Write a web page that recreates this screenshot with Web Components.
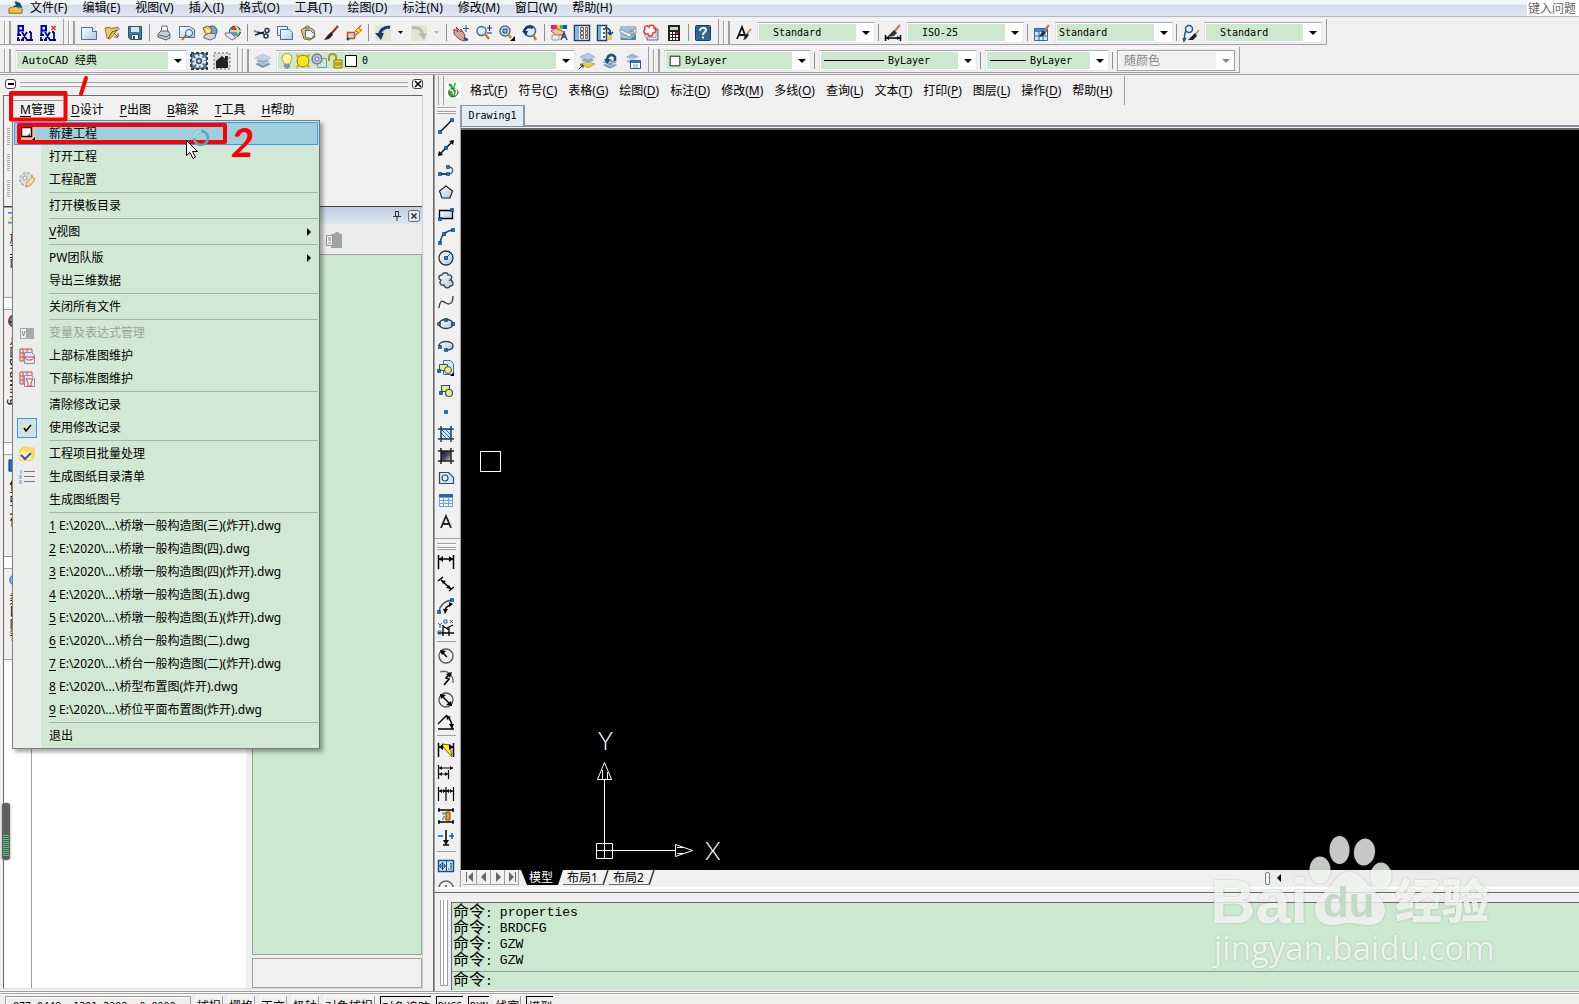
<!DOCTYPE html>
<html lang="zh-CN">
<head>
<meta charset="utf-8">
<title>AutoCAD 经典</title>
<style>
html,body{margin:0;height:100%}
body{overflow:hidden;background:#f0f0f0;color:#000;font:12px/16px "Noto Sans","Noto Sans CJK SC",sans-serif;
--face:#f0f0f0;--line:#a0a0a0;--dark:#696969;--green:#cce8cf;
--mono:"DejaVu Sans Mono","Noto Sans CJK SC",monospace}
</style>
</head>
<body>
<cad-app></cad-app>
<script>
const ICONS = {
app:'<path d="M1 13V8l6-3 8 3v5z" fill="#f4c430" stroke="#8a6a10"/><path d="M6 7l2-7 5 2 3 7z" fill="#13496b"/><path d="M7 7l9 1M6 0l-3 6 5-2z" stroke="#cfe6f5" fill="#fff"/>',
pxi:'<path d="M1.500 10V1H6v4.500H2" stroke="#00b" stroke-width="2" fill="none"/><path d="M0 10h4M5 7l5 8M10 7l-5 8M4 15h3M9 15h3M14 7v8M12 7h2M12 15h4M1 12v3h2" stroke="#009" stroke-width="1.800" fill="none"/>',
pxx:'<path d="M1.500 10V1H6v4.500H2" stroke="#00b" stroke-width="2" fill="none"/><path d="M0 10h4M5 7l5 8M10 7l-5 8M4 15h3M9 15h3M14 7v8M12 7h2M12 15h4M1 12v3h2" stroke="#009" stroke-width="1.800" fill="none"/><path d="M11.500 1l4 4M15.500 1l-4 4" stroke="#e22" stroke-width="1.500"/>',
new:'<path d="M.5 2.500h11l4 4v8H.5z" fill="url(#pg)" stroke="#4e7190"/><path d="M11.500 2.500v4h4" fill="#fff" stroke="#4e7190"/>',
open:'<path d="M1 3l5-1 1 2 7-2-2 5-6 7-3-1z" fill="#e8c96a" stroke="#a07a20"/><path d="M4 14l4-7 6-2M10 8l4 4M14 8v4h-4" stroke="#6b5320" fill="none"/><path d="M8 3h7v2" stroke="#888" fill="#ddd"/>',
save:'<path d="M1.500 1.500h13v13h-11l-2-2z" fill="#3f78b3" stroke="#2b5078"/><path d="M4 2h8v5H4z" fill="#d8e6f2"/><path d="M4.500 9.500h7v5h-7z" fill="#fff" stroke="#2b5078"/><path d="M6 11h2v3H6z" fill="#2b5078"/>',
print:'<path d="M5 7l1-6h5l1 6z" fill="#fff" stroke="#667"/><path d="M2 9l3-3h7l2 3v4l-4 2-8-3z" fill="#c9cdd8" stroke="#566"/><path d="M3 10l8 2 3-3" stroke="#566" fill="none"/>',
preview:'<path d="M.5 1.500h10l5 3v8H.5z" fill="url(#pg)" stroke="#4e7190"/><circle cx="10" cy="8" r="3.500" fill="#dff0fa" stroke="#357"/><path d="M7 10l-4 5" stroke="#a63" stroke-width="2"/>',
publish:'<circle cx="10" cy="6" r="5" fill="#6aa9d8" stroke="#357"/><path d="M1 3l5-2 4 3-1 5-5 1z" fill="#f2c838" stroke="#8a6410"/><path d="M2 11l5-3 7 1-1 4-5 2-6-2z" fill="#d5d8e0" stroke="#667"/><path d="M4 4l3 3" stroke="#fff" stroke-width="2"/>',
web:'<circle cx="10" cy="6.500" r="5.500" fill="#4aa3d8" stroke="#246"/><path d="M10 1c4 1 4 9 0 11M5 6h11" stroke="#ffe27a" fill="none" stroke-width="1.500"/><path d="M7 2h4v3H7z" fill="#d9432f"/><path d="M0 8h6l5 5-4 2-6-4z" fill="#e4e4e8" stroke="#777"/><path d="M11 9l3 2" stroke="#3a3" stroke-width="2"/>',
cut:'<path d="M0 6l10 3M1 10l9-3" stroke="#223" stroke-width="1.500"/><path d="M0 6l4 1" stroke="#9ab" /><circle cx="13" cy="5.500" r="2" fill="none" stroke="#235" stroke-width="1.500"/><circle cx="12" cy="11" r="2" fill="none" stroke="#235" stroke-width="1.500"/>',
copy:'<path d="M.5 1.500h10v9H.5z" fill="#e8f2fa" stroke="#3f6f9a"/><path d="M3.500 4.500h9l3 3v7h-12z" fill="url(#pg)" stroke="#3f6f9a"/>',
paste:'<path d="M1 5l6-4 7 4 1 7-5 3-6-1z" fill="#d9c07a" stroke="#8a6a20"/><path d="M6 1h3v3H5z" fill="#aaa" stroke="#666" stroke-width=".5"/><path d="M5.500 5.500h5l4 4-3 4-6-1z" fill="#eef5fb" stroke="#46708f"/>',
brush:'<path d="M15 1L8 9" stroke="#8a3b1c" stroke-width="2"/><path d="M8 7l2 3-4 4-5 1 4-5z" fill="#222"/>',
match:'<path d="M15 0L9 6l3 1-3 4 7-6-3-1z" fill="#fd3" stroke="#c60"/><path d="M1.500 7.500h7v6h-7z" fill="#bcd9f2" stroke="#d54c10" stroke-width="1.500"/><circle cx="2" cy="14" r="1.500" fill="#157"/>',
undo:'<path d="M0 0h16v16H0z" fill="#e4e3d6"/><path d="M4 11C5 5 9 2 15 2" stroke="#1d3a66" stroke-width="3" fill="none"/><path d="M0 8h9l-3 7z" fill="#1d3a66"/>',
redo:'<path d="M0 0h16v16H0z" fill="#e4e3d6"/><path d="M1 3c6-1 10 1 11 7" stroke="#bcbcb4" stroke-width="3" fill="none"/><path d="M7 8h9l-3 7z" fill="#bcbcb4"/>',
pan:'<path d="M1 4l4 3-2-5 5 5 0-3 4 6-1 4 3 1-3 1-5-2-5-5z" fill="#dba394" stroke="#7c4a40"/><path d="M13 0v7M10 3.500h6" stroke="#258"/><path d="M11 13l4 2" stroke="#258" stroke-width="2"/>',
zoom:'<circle cx="5.500" cy="6" r="4.500" fill="#dcecf7" stroke="#567" stroke-width="1.500"/><path d="M9 9l4 5" stroke="#b9853c" stroke-width="2.500"/><path d="M11 3h5M13.500 0v6M11 8h5" stroke="#135"/>',
zoomw:'<circle cx="6" cy="6" r="5" fill="#dcecf7" stroke="#567" stroke-width="1.500"/><path d="M4 4h4v4H4z" fill="#8fb6d8" stroke="#247"/><path d="M9 9l3 4" stroke="#b9853c" stroke-width="2.500"/><path d="M16 11v5h-5z"/>',
zoomp:'<circle cx="8" cy="6" r="5.500" fill="#dcecf7" stroke="#567" stroke-width="1.500"/><path d="M11 10l3 5" stroke="#b9853c" stroke-width="2.500"/><path d="M2 7c1-5 5-6 9-4" stroke="#1d3a66" stroke-width="2.500" fill="none"/><path d="M0 6h6l-2 5z" fill="#1d3a66"/>',
props:'<path d="M0 0h3v4H0z" fill="#e0e"/><path d="M3 0h3v4H3z" fill="#e33"/><path d="M6 0h3v4H6z" fill="#fd0"/><path d="M9 0h3v4H9z" fill="#3c3"/><path d="M12 0h4v4h-4z" fill="#24e"/><path d="M0 6l5-3 6 3 3 1-3 3-6 0z" fill="#f0c0a0" stroke="#955"/><path d="M1 10h7v5H1z" fill="#eee" stroke="#999"/><path d="M10 15l3-7 3 7M11 12h4" stroke="#346" stroke-width="1.500" fill="none"/>',
dc:'<path d="M.5.5h15v15H.5z" fill="#fff" stroke="#1d3f66" stroke-width="1.500"/><path d="M1 1h4v14H1z" fill="#8fb3d6"/><path d="M6.500 2.500h3v3h-3zM11.500 2.500h2v3h-2zM6.500 6.500h3v3h-3zM11.500 6.500h2v3h-2zM6.500 10.500h3v3h-3zM11.500 10.500h2v3h-2z" fill="#ddd" stroke="#444" stroke-width=".8"/>',
tp:'<path d="M.5.5h9v15h-9z" fill="#fff" stroke="#1d3f66" stroke-width="1.500"/><path d="M1 1h3v14H1z" fill="#7ea8d0"/><path d="M6 3h2v2H6zM6 7h2v2H6zM6 11h2v2H6z" fill="#555"/><path d="M8 3c5 0 6 3 5 7M13 10l-2-3M13 10l3-3" stroke="#1d3f66" stroke-width="1.500" fill="none"/><path d="M11 11h4v4h-4z" fill="#ec4"/>',
sheet:'<path d="M0 1h16v14H0z" fill="#a3c1d4"/><path d="M0 4l8 4 8-5v5l-7 4-9-5z" fill="#eef2ee" stroke="#8a9a9a"/><path d="M1 13l9 1 6-5v6H1z" fill="#4f86ad"/><circle cx="12" cy="7.500" r="2" fill="#c8ccc8" stroke="#777"/>',
mark:'<path d="M4 4h11v11H4z" fill="#dde" stroke="#668"/><path d="M2 2h11v10H2z" fill="#fff" stroke="#99a"/><path d="M2 4c-2-3 3-4 4-2 1-3 6-2 5 1 3 1 2 5-1 5 0 4-5 4-5 1-4 1-5-3-3-5z" fill="#fff" stroke="#e33" stroke-width="1.500"/>',
calc:'<path d="M2 0h12v16H2z" fill="#222"/><path d="M4 2h8v3H4z" fill="#bfe0c0"/><path d="M4 7h2v2H4zM7 7h2v2H7zM4 10h2v2H4zM7 10h2v2H7zM4 13h2v2H4zM7 13h2v2H7zM10 10h2v2h-2zM10 13h2v2h-2z" fill="#fff"/><path d="M10 7h2v2h-2z" fill="#e22"/>',
help:'<rect x=".5" y=".5" width="15" height="15" rx="1" fill="#2b6699" stroke="#173d63"/><path d="M5 6c0-4 6-4 6-1 0 2-3 2-3 5M8 11.500v2" stroke="#fff" stroke-width="2" fill="none"/>',
tstyle:'<path d="M1 14L6 2l4 11M3 10h6" stroke="#111" stroke-width="1.800" fill="none"/><path d="M15 4l-4 5" stroke="#c85" stroke-width="2"/><path d="M11 8l2 2-3 4-3 1z" fill="#222"/>',
dstyle:'<path d="M.5 10v6M15.500 10v6M1 13h14" stroke="#000" stroke-width="1.500"/><path d="M4 11l-3 2 3 2M12 11l3 2-3 2"/><path d="M15 0L9 7" stroke="#c75" stroke-width="2"/><path d="M9 5l3 3-3 3-7 1z" fill="#333"/>',
tbstyle:'<path d="M.5 3.500h13v12H.5z" fill="#d6e6f8" stroke="#3466a8"/><path d="M1 4h12v3H1z" fill="#4a7fc4"/><path d="M1 11h12M5 7v8M9 7v8" stroke="#3466a8"/><path d="M15 0L9 7" stroke="#c75" stroke-width="2"/><path d="M9 5l3 3-3 3-4 1z" fill="#333"/>',
ml:'<circle cx="6" cy="4" r="3.500" fill="#e6f2fa" stroke="#1c5c94" stroke-width="1.500"/><path d="M3 6C1 9 2 11 1 15M0 13l1 3 2-3" stroke="#1c5c94" stroke-width="1.500" fill="none"/><path d="M16 5l-4 5" stroke="#c96" stroke-width="2"/><path d="M12 8l2 3-4 4-5 0z" fill="#222"/>',
gear:'<path d="M0 0h16v16H0z" fill="#55758d"/><path d="M0 0h16v16H0z" fill="none" stroke="#26455f" stroke-width="2" stroke-dasharray="3 2"/><circle cx="8" cy="8" r="5.500" fill="none" stroke="#e8eef2" stroke-width="3" stroke-dasharray="2.500 1.820"/><circle cx="8" cy="8" r="4" fill="#3d5a72" stroke="#e8eef2" stroke-width="1.500"/><circle cx="8" cy="8" r="1.500" fill="#cdd"/>',
home:'<path d="M0 0h16v16H0z" fill="#ddd"/><path d="M0 0h16v16H0z" fill="none" stroke="#666" stroke-dasharray="2 2"/><path d="M2 8l6-5 6 5v7H2z" fill="#222"/><path d="M11 3h3v4h-3z" fill="#222"/>',
layers:'<path d="M0 11l8-3 8 3-8 4z" fill="#7c97b0"/><path d="M0 8l8-3 8 3-8 4z" fill="#9fb6ca" stroke="#fff" stroke-width=".5"/><path d="M0 5l8-4 8 4-8 3z" fill="#c6d6e4" stroke="#8aa4bb" stroke-width=".5"/>',
lay1:'<path d="M1 11l8-3 7 3-7 4z" fill="#e8c83c" stroke="#987a10" stroke-width=".5"/><path d="M1 7l8-3 7 3-7 4z" fill="#8faac2" stroke="#fff" stroke-width=".5"/><path d="M1 4l8-4 7 4-7 3z" fill="#b6cadb" stroke="#7c98b0" stroke-width=".5"/><path d="M0 16l4-4M1 12h3v3" stroke="#124" fill="none"/>',
lay2:'<path d="M0 12l8-3 8 3-8 4zM0 9l8-3 8 3-8 4z" fill="#7f9bb6" stroke="#fff" stroke-width=".5"/><path d="M5 8c0-6 5-8 8-4v4" stroke="#264c7a" stroke-width="2.500" fill="none"/><path d="M2 6h7l-4 5z" fill="#264c7a"/>',
lay3:'<path d="M0 8l7-3 8 3-8 4zM0 4l7-4 8 4-8 3z" fill="#9db6cb" stroke="#fff" stroke-width=".5"/><path d="M5.500 7.500h10v8h-10z" fill="#fff" stroke="#1f5a9c"/><path d="M6 7h9v3H6z" fill="#2a6fc0"/><path d="M8 12h5M8 14h5" stroke="#89a"/>',
bulb:'<path d="M3 5c0-6 10-6 10 0 0 3-2 3-2 6H5c0-3-2-3-2-6z" fill="#fff6a8" stroke="#b79b38"/><path d="M5 11h6v3l-2 2H7l-2-2z" fill="#8b93a6"/>',
sun:'<path d="M1 1h3v3H1zM12 1h3v3h-3zM1 12h3v3H1zM12 12h3v3h-3z" fill="#e8b820"/><circle cx="8" cy="8" r="6" fill="#f6e71d" stroke="#8a7a10"/>',
vp:'<circle cx="6" cy="6" r="5" fill="#b8c4d8" stroke="#7183a5" stroke-width="1.500"/><circle cx="6" cy="6" r="2" fill="#dfe6f0" stroke="#7183a5"/><path d="M10.500 5.500h5v9h-9v-4" fill="none" stroke="#8894a8"/>',
lock:'<path d="M2 8V4c0-4 7-4 7 0v3" stroke="#a3a014" stroke-width="2" fill="none"/><path d="M7 7h8v8H7z" fill="#e8d93a" stroke="#807808"/><path d="M8 10h6M8 12h6" stroke="#807808"/>',
sq:'<path d="M2.500 2.500h11v11h-11z" fill="#fff" stroke="#000"/>',
lisp:'<path d="M0 0h16v16H0z" fill="#fff"/><path d="M3 1l4 5M5 1l2 4M10 0L8 6" stroke="#2a2" stroke-width="1.500"/><path d="M3 8c4-4 9-2 10 2-1 5-8 7-10 2z" fill="#4c9e4c" stroke="#175c17"/><path d="M4 8c2-2 4 1 4 4M9 6c3 1 3 4 1 7" stroke="#fff" stroke-width="1.500" fill="none"/>',
line:'<path d="M2 14L14 2" stroke="#000" stroke-width="1.300"/>@2,14@14,2',
xline:'<path d="M1 15L15 1" stroke="#000" stroke-width="1.500"/><path d="M0 16l1-5 4 4zM16 0l-5 1 4 4z"/>@8,8',
pline:'<path d="M2 12h8" stroke="#000" stroke-width="1.500"/><path d="M10 5c6-1 6 7 1 7" stroke="#666" stroke-width="1.500" fill="none"/>@2,12@10,12@10,5',
poly:'<path d="M8 2l6.500 5-2.500 7H4L1.500 7z" fill="url(#pg)" stroke="#222" stroke-width="1.200"/>',
rect:'<path d="M1.500 4.500h13v8h-13z" fill="url(#pg)" stroke="#000" stroke-width="1.300"/>@2,13@14,4',
arc:'<path d="M2 15C3 8 7 3 15 2" stroke="#444" stroke-width="1.500" fill="none"/>@2,15@6,6@15,2',
circ:'<circle cx="8" cy="8" r="7" fill="url(#pg)" stroke="#333" stroke-width="1.300"/><path d="M8 8l5-5" stroke="#07c"/>@8,8',
cloud:'<path d="M3 8c-3-1-3-5 1-5 1-3 6-3 6 0 4-1 5 3 2 5 4 1 4 6 0 6-1 3-6 2-6-1-4 1-5-3-3-5z" fill="url(#pg)" stroke="#444" stroke-width="1.300"/>',
spline:'<path d="M1 14C2 5 5 7 8 9s7 1 7-7" stroke="#444" stroke-width="1.400" fill="none"/>',
ell:'<ellipse cx="8" cy="8" rx="7" ry="4.500" fill="url(#pg)" stroke="#333" stroke-width="1.300"/>@8,4@1,8@15,8',
ella:'<path d="M1 8c0-6 14-6 14 0 0 3-3 4-7 4" fill="url(#pg)" stroke="#444" stroke-width="1.500"/>@8,12@2,9',
insb:'<path d="M5.500.500h7l3 3v11h-10z" fill="#dbe8f4" stroke="#46729a"/><path d="M1.500 4.500h8v6h-8z" fill="#f2e98a" stroke="#2f5573"/><circle cx="10" cy="10" r="3.500" fill="#f2e98a" stroke="#2f5573"/><path d="M16 12v4h-4z"/>@1,11',
mkb:'<path d="M3.500 3.500h8v6h-8z" fill="#f2e98a" stroke="#2f5573" stroke-width="1.200"/><circle cx="11" cy="11" r="3.500" fill="#f2e98a" stroke="#2f5573" stroke-width="1.200"/>@3,11',
pt:'@8,8',
hatch:'<path d="M3 3h10v10H3z" fill="#cfe2f2"/><path d="M3 3l10 10M3 7l6 6M7 3l6 6M3 11l2 2M11 3l2 2" stroke="#37688f"/><path d="M0 3h16M0 13h16M3 0v16M13 0v16" stroke="#1a3e5e" stroke-width="1.500"/>',
grad:'<path d="M3 3h10v10H3z" fill="url(#gd)"/><path d="M0 3h16M0 13h16M3 0v16M13 0v16" stroke="#222" stroke-width="1.500"/>',
region:'<path d="M1.500 2.500h9l5 5v6h-14z" fill="#d9e8f5" stroke="#1d4f78" stroke-width="1.200"/><circle cx="7" cy="8" r="3" fill="#f0f0f0" stroke="#1d4f78" stroke-width="1.200"/>',
table:'<path d="M1 2h14v13H1z" fill="#6f9fdc"/><path d="M1 2h14v3H1z" fill="#2c62b4"/><path d="M2 6h3v2H2zM6 6h4v2H6zM11 6h3v2h-3zM2 9h3v2H2zM6 9h4v2H6zM11 9h3v2h-3zM2 12h3v2H2zM6 12h4v2H6zM11 12h3v2h-3z" fill="#eef5ff"/>',
mtext:'<path d="M3 14L8 2l5 12M5 10h6" stroke="#222" stroke-width="1.800" fill="none"/>',
dlin:'<path d="M.5 1v14M15.500 1v14M1 5h14" stroke="#000" stroke-width="1.500" fill="none"/><path d="M1 5l4-3v6zM15 5l-4-3v6z"/>',
dali:'<path d="M0 5l5-4M11 15l5-4M3 4l10 9" stroke="#000" stroke-width="1.500"/><path d="M3 4l5 1-3 3zM13 13l-5-1 3-3z"/>',
darc:'<path d="M1 14C2 7 6 3 14 2" stroke="#555" stroke-width="1.500" fill="none"/><path d="M7 13c0-3 2-5 6-6" stroke="#000" stroke-width="1.500" fill="none"/><path d="M5 11h5l-3 5zM15 6l-4-2v5z"/>@1,14@14,2',
dord:'<path d="M5 5v11M5 6l6 4M11 8v8M0 13h16M9 8l6-3" stroke="#000" stroke-width="1.300" fill="none"/><path d="M0 3l2 2 2-2M2 5v3M6 0h3v3H6zM12 0l3 3M15 0l-3 3M0 11h3v3H0z" stroke="#26629a" fill="none"/>',
drad:'<circle cx="8" cy="8" r="7" fill="none" stroke="#555" stroke-width="1.300"/><path d="M3 3l6 6" stroke="#000" stroke-width="1.500"/><path d="M2 2l6 1-4 4z"/>',
djog:'<path d="M2 2c8-3 14 4 13 11" stroke="#666" fill="none" stroke-width="1.300"/><path d="M12 3L8 8l3 1-5 6" stroke="#000" fill="none" stroke-width="1.500"/><path d="M14 2L8 4l4 4z"/>',
ddia:'<circle cx="8" cy="8" r="7" fill="none" stroke="#555" stroke-width="1.300"/><path d="M3 3l10 10" stroke="#000" stroke-width="1.500"/><path d="M2 2l6 1-5 4zM14 14l-6-1 5-4z"/>',
dang:'<path d="M0 15h16M0 10l9-9M9 3c4 2 5 6 5 12" stroke="#000" stroke-width="1.400" fill="none"/><path d="M8 1l5 2-4 3zM14 15l-3-5h5z"/>',
qdim:'<path d="M.5 1v14M15.500 1v14M1 5h14" stroke="#000" stroke-width="1.500"/><path d="M4 2l8 1 2 12L6 6z" fill="#fe2" stroke="#660"/><path d="M1 5l4-3v6zM15 5l-4-3v6z"/>',
dbase:'<path d="M.5 1v14M1 4h14M1 10h9M10.500 6v9" stroke="#000" stroke-width="1.200"/><path d="M1 4l3-2v4zM15 4l-3-2v4zM1 10l3-2v4zM10 10L7 8v4z"/>',
dcont:'<path d="M.5 1v14M8 1v14M15.500 1v14M1 5h14" stroke="#000" stroke-width="1.200"/><path d="M1 5l3-2v4zM8 5L5 3v4zM8 5l3-2v4zM15 5l-3-2v4z"/>',
dspace:'<path d="M0 2h16M0 14h16M1 0v4M15 0v4M1 12v4M15 12v4" stroke="#000" stroke-width="1.300"/><path d="M4 5h4M4 11h4M6 5v6" stroke="#06a" stroke-dasharray="2 1"/><path d="M8 4h4v8H8z" fill="#e9a820" stroke="#742"/>',
dbreak:'<path d="M8 0v14M5 15h6" stroke="#000" stroke-width="1.500"/><path d="M5 10h6l-3 5z"/><path d="M0 6h5M11 6h5M14 3v6" stroke="#06a" stroke-width="1.500"/>',
tol:'<path d="M.5 2.500h15v11H.5z" fill="#d6e6f6" stroke="#155088" stroke-width="1.500"/><path d="M8.500 3v10M4.500 4v8M1 8h7" stroke="#155088"/><circle cx="4.500" cy="8" r="2.500" fill="none" stroke="#155088"/><path d="M10 11h1M13 5v7M12 6l1-1" stroke="#036"/>',
cmark:'<circle cx="8" cy="8" r="7" fill="none" stroke="#666" stroke-width="1.500"/><path d="M8 5v6M5 8h6" stroke="#000"/>',
mnew:'<path d="M0 0h16v16H0z" fill="#f3b9b4"/><path d="M2.500 1.500h10v9h-10z" fill="#fff" stroke="#000" stroke-width="1.500"/><path d="M8 10l3-3v3z" fill="#e22"/><path d="M16 11v5h-5z"/>',
mgear:'<circle cx="7.500" cy="7.500" r="6" fill="#dcdcdc" stroke="#b4b4b4" stroke-width="3" stroke-dasharray="2.500 1.500"/><circle cx="7.500" cy="7.500" r="5.500" fill="#dedede"/><circle cx="6" cy="6" r="2" fill="#fff" stroke="#999"/><path d="M7 15l1-5 5-5 3 2-4 6z" fill="#f5dca0" stroke="#c99a4a"/>',
mvar:'<path d="M1 3h14v11H1z" fill="#a8aca8"/><path d="M2 4h5v9H2z" fill="#e9eeea"/><path d="M3 6l1.500 5L6 6" stroke="#888" fill="none"/>',
mup:'<path d="M1 1h12v12H1zM1 5h12M1 9h12M4 1v12M8 1v12" fill="none" stroke="#d04848"/><path d="M5.500 4.500h7l3 3v8h-10z" fill="#e0e4f4" stroke="#8890b8"/><path d="M6 9h9c0 4-9 4-9 0z" fill="#fff" stroke="#d33"/>',
mdown:'<path d="M1 1h12v12H1zM1 5h12M1 9h12M4 1v12M8 1v12" fill="none" stroke="#d04848"/><path d="M5.500 4.500h7l3 3v8h-10z" fill="#e0e4f4" stroke="#8890b8"/><path d="M7 8h7l-2 3v4H9v-4z" fill="#fff" stroke="#d33"/>',
mcheck:'<path d="M5 8l2 3 5-6" fill="none" stroke="#000" stroke-width="1.500"/>',
mbatch:'<path d="M1 4l3-3h4l1 1h6v9l-2 3H1z" fill="#ffe06a" stroke="#f0cc40"/><path d="M1 5h12v9H1z" fill="#fff09a" stroke="#f0d850"/><path d="M2 9l4 4 6-6" stroke="#44d" stroke-width="2" fill="none"/>',
mlist:'<path d="M5 2.500h11M5 7.500h11M5 12.500h11" stroke="#777"/><path d="M2 1v4M0 7h3M0 9h3M0 12h3M0 14h3" stroke="#8bb8dc" stroke-width="1.500"/>',
mclip:'<path d="M5 2h3l2-2h2l2 2h2v14H5z" fill="#a0a4a0"/><path d="M.5 3.500h6v10h-6z" fill="#eee" stroke="#999"/><path d="M2 6h3M2 8h3M2 11h3" stroke="#888"/>',
tab1:'<path d="M0 1h16M0 12h12" stroke="#58c" stroke-width="2"/><path d="M1 7l5-3v6z" fill="#f7c530"/>',
tab2:'<circle cx="8" cy="8" r="7" fill="#3a7" stroke="#a33" stroke-width="2"/><path d="M1 9h14" stroke="#23a" stroke-width="2"/>',
tab3:'<path d="M1 1h13v13H1z" fill="#36a" stroke="#147"/>',
tab4:'<circle cx="8" cy="8" r="6" fill="#7ab8f0" stroke="#36a"/>'
};
const svg = (n, w = 16) => {
  const body = ICONS[n].replace(/@(\d+),(\d+)/g, (m, x, y) => `<path d="M${x - 1.5} ${y - 1.5}h3v3h-3z" fill="#0a7bd0" stroke="#035" stroke-width=".6"/>`);
  const defs = (body.includes('url(#pg)') ? '<linearGradient id="pg" x2="1" y2="1"><stop stop-color="#fff"/><stop offset="1" stop-color="#a9c9e2"/></linearGradient>' : '') +
    (body.includes('url(#gd)') ? '<linearGradient id="gd" x2="1" y2="1"><stop stop-color="#112"/><stop offset=".5" stop-color="#446"/><stop offset="1" stop-color="#dd5"/></linearGradient>' : '');
  return `<svg viewBox="0 0 16 16" width="${w}" height="${w}" aria-hidden="true">${defs ? `<defs>${defs}</defs>` : ''}${body}</svg>`;
};
const BASE = `<style>*{box-sizing:border-box}svg{display:block;flex:none;overflow:visible}
button{font:inherit;color:inherit;background:none;border:0;padding:0;margin:0;white-space:nowrap}u{text-underline-offset:2px}</style>`;
const define = (name, render) => customElements.define(name, class extends HTMLElement {
  connectedCallback() {
    if (this.shadowRoot) return;
    this.attachShadow({mode: 'open'}).innerHTML = BASE + render(this);
  }
});

define('cad-icon', el => `<style>:host{display:block;flex:none}</style>${svg(el.getAttribute('name'), el.getAttribute('size') || 16)}`);

define('cad-button', el => `<style>:host{display:block;flex:none}button{display:flex;align-items:center;height:22px;width:23px;padding:0 3px 0 4px}
:host([strip]) button{width:23px;padding:0 4px 0 3px}</style><button aria-label="${el.getAttribute('name')}">${svg(el.getAttribute('name'))}</button>`);

define('cad-arrow', () => `<style>:host{display:flex;flex:none;width:13px;justify-content:center}button{display:flex}</style>
<button aria-label="more"><svg width="5" height="3"><path d="M0 0h5L2.500 3z" fill="currentColor"/></svg></button>`);

define('cad-sep', () => `<style>:host{display:flex;flex:none;width:6px;justify-content:center;align-self:stretch;padding:3px 0}
i{width:1px;background:#909090}</style><i></i>`);

define('cad-toolbar', () => `<style>:host{display:flex;flex:none;align-items:center;margin-bottom:2px;padding:2px 4px 0;border:solid var(--line);border-width:0 1px 1px 0;box-shadow:inset 0 1px #fafafa}
i{align-self:stretch;width:7px;margin-right:2px;border:solid var(--line);border-width:0 1px;background:linear-gradient(90deg,#fff 1px,var(--face) 1px 4px,var(--line) 4px 5px,#fff 5px)}</style><i></i><slot></slot>`);

define('cad-combo', el => `<style>:host{display:flex;flex:none;height:21px;margin:0 0 0 2px;border:1px solid #abadb3;border-color:#abadb3 #e3e9ef #e3e9ef #e2e3ea;background:#fff;padding:1px;align-items:stretch}
div{flex:1;min-width:0;display:flex;align-items:center;background:var(--green)}
:host([off]) div{background:var(--face)}
:host([off]){border-color:var(--line);color:#888}
select{appearance:none;flex:1;min-width:0;align-self:stretch;background:none;border:0;border-radius:0;padding:0;color:inherit;opacity:1;font:10px/16px var(--mono)}
:host([big]) select{font-size:11px}:host([off]) select{font-size:12px}
b{width:17px;display:flex;align-items:center;justify-content:flex-end;padding-right:3px}</style>
<div><slot></slot><select aria-label="${el.getAttribute('label')}" style="padding-left:${el.getAttribute('indent') || 4}px"${el.hasAttribute('off') ? ' disabled' : ''}><option>${el.getAttribute('value')}</option></select></div>
<b><svg width="8" height="4"><path d="M0 0h8L4 4z" fill="currentColor"/></svg></b>`);

define('cad-menubar', () => {
  const items = ['文件(F)','编辑(E)','视图(V)','插入(I)','格式(O)','工具(T)','绘图(D)','标注(N)','修改(M)','窗口(W)','帮助(H)'];
  return `<style>:host{display:flex;flex:none;height:17px;border-bottom:1px solid #b0b8cc;background:linear-gradient(#f2f5fa 0 4px,#d5dcee 5px,#e0e5f3);padding-left:8px;align-items:center}
nav{display:flex;gap:15px;margin-left:7px;flex:1}
input{width:52px;height:16px;border:0;padding:0 1px;font:12px/16px "Noto Sans CJK SC",sans-serif;background:#fff}input::placeholder{color:#666}</style>
${svg('app', 15)}<nav>${items.map(t => `<button>${t}</button>`).join('')}</nav><input aria-label="键入问题" placeholder="键入问题">`;
});

const btns = s => s.split(' ').map(n => n === '|' ? '<cad-sep></cad-sep>' : n === 'v' ? '<cad-arrow></cad-arrow>' : n === 'V' ? '<cad-arrow class="dim"></cad-arrow>' : `<cad-button name="${n}"></cad-button>`).join('');
const combo = (w, label, value, indent, inner = '', extra = '') => `<cad-combo style="width:${w}px" label="${label}" value="${value}" indent="${indent}" ${extra}>${inner}</cad-combo>`;

define('cad-toolbars', () => `<style>:host{display:block;flex:none;padding-top:2px;border-bottom:1px solid var(--line)}
.row{display:flex;height:28px}.row+.row{height:27px}.row+.row cad-toolbar{margin-bottom:1px}.dim{color:#bbb}
.in{margin-left:2px}.rule{height:1px;background:#000;margin-left:3px}.set{display:flex;padding-left:1px}</style>
<div class="row"><cad-toolbar>${btns('pxi pxx')}</cad-toolbar>
<cad-toolbar>${btns('new open save | print preview publish web | cut copy paste brush match | undo v redo V | pan zoom zoomw zoomp | props dc tp sheet mark calc | help')}</cad-toolbar>
<cad-toolbar>${btns('tstyle')}${combo(118,'文字样式','Standard',14)}${btns('| dstyle')}${combo(118,'标注样式','ISO-25',14)}${btns('| tbstyle')}${combo(118,'表格样式','Standard',2)}${btns('| ml')}${combo(118,'引线样式','Standard',14)}</cad-toolbar></div>
<div class="row"><cad-toolbar>${combo(172,'工作空间','AutoCAD 经典',5,'','big')}${btns('gear home')}</cad-toolbar>
<cad-toolbar>${btns('layers')}${combo(299,'图层','0',3,`<span class="set">${['bulb','sun','vp','lock','sq'].map(n => `<cad-icon name="${n}"></cad-icon>`).join('')}</span>`)}${btns('lay1 lay2 lay3')}</cad-toolbar>
<cad-toolbar>${combo(147,'颜色','ByLayer',3,'<cad-icon class="in" name="sq" size="14"></cad-icon>')}<cad-sep></cad-sep>${combo(158,'线型','ByLayer',4,'<span class="rule" style="width:60px"></span>')}<cad-sep></cad-sep>${combo(124,'线宽','ByLayer',4,'<span class="rule" style="width:36px"></span>')}<cad-sep></cad-sep>${combo(118,'打印样式','随颜色',5,'','off')}</cad-toolbar></div>`);

define('drop-menu', () => {
  const rows = [['新建工程','mnew','hot'],['打开工程'],['工程配置','mgear'],0,['打开模板目录'],0,['<u>V</u>视图','','sub'],0,['PW团队版','','sub'],['导出三维数据'],0,['关闭所有文件'],0,['变量及表达式管理','mvar','off'],['上部标准图维护','mup'],['下部标准图维护','mdown'],0,['清除修改记录'],['使用修改记录','mcheck','on'],0,['工程项目批量处理','mbatch'],['生成图纸目录清单','mlist'],['生成图纸图号'],0,
  ...['桥墩一般构造图(三)(炸开)','桥墩一般构造图(四)','桥墩一般构造图(四)(炸开)','桥墩一般构造图(五)','桥墩一般构造图(五)(炸开)','桥台一般构造图(二)','桥台一般构造图(二)(炸开)','桥型布置图(炸开)','桥位平面布置图(炸开)'].map((t, i) => [`<u>${i + 1}</u> E:\\2020\\...\\${t}.dwg`]),0,['退出']];
  return `<style>:host{display:block;width:308px;border:1px solid #808080;border-right-color:#707070;padding:1px;background:linear-gradient(90deg,#e9eeea 28px,#d1e8d4 28px);box-shadow:3px 3px 4px rgba(0,0,0,.35)}
button{display:flex;align-items:center;width:100%;height:23px;text-align:left}
.i{width:35px;display:flex;padding-left:5px;flex:none}.t{flex:1}
hr{height:1px;border:0;margin:1px 0 1px 35px;background:#a8b4aa}
.hot{background:#9fcfdf;box-shadow:inset 0 0 0 1px #3399ff}.off{color:#98a69a}
.on .i{padding:0}.on .b{margin-left:3px;padding:1px;border:1px solid #3399ff;background:#cfe3e0}
.sub:after{content:"";border:4px solid transparent;border-left-color:#000;border-right:0;margin-right:7px}</style>
${rows.map(r => r ? `<button class="${r[2] || ''}"${r[2] === 'off' ? ' disabled' : ''}><span class="i"><span class="b">${r[1] ? svg(r[1]) : ''}</span></span><span class="t">${r[0]}</span></button>` : '<hr>').join('')}`;
});

define('side-tab', el => `<style>:host{display:block;height:${el.getAttribute('h')}px;background:var(--face);border-bottom:1px solid var(--line);border-top:1px solid var(--line);margin-bottom:11px;padding:4px 0 0 4px;overflow:hidden;flex:none}
button{display:flex;flex-direction:column;gap:6px;align-items:flex-start}span{writing-mode:vertical-lr;font-size:12px;line-height:12px}</style>
<button>${svg(el.getAttribute('icon'), 14)}<span><slot></slot></span></button>`);

define('side-dock', () => `<style>:host{display:flex;flex-direction:column;width:435px;flex:none;position:relative;border-right:1px solid var(--line);box-shadow:inset -1px 0 var(--dark);padding:0 11px 2px 3px}
header{display:flex;align-items:center;gap:2px;height:18px;margin-bottom:2px;padding-left:2px}
header i{flex:1;height:5px;margin:0 2px;border:solid var(--line);border-width:1px 0;background:#fff;background-clip:content-box;padding-top:2px}
header button{width:11px;height:10px;border:1px solid #444;border-radius:3px;display:flex;align-items:center;justify-content:center;background:#fff}
.box{flex:1;display:flex;flex-direction:column;border:1px solid var(--dark);border-right-color:#d0d0d0;border-bottom-color:#ddd;min-height:0}
nav{display:flex;height:27px;padding-left:8px;flex:none;align-items:center}
nav button{padding:0 8px;height:20px}nav .open{border-top:1px solid #999;border-left:1px solid #ccc;padding-left:7px}
.tools{height:83px;flex:none;display:flex;flex-direction:column;gap:9px;padding:5px 3px}
.tools i{width:3px;height:17px;background:repeating-linear-gradient(#aaa 0 1px,transparent 1px 2px)}
.main{flex:1;display:flex;min-height:0;border-top:1px solid #444}
.tabs{width:28px;border-right:1px solid var(--line);background:#fff;display:flex;flex-direction:column}
.tree{flex:1;background:#fff}
.list{width:170px;margin-left:6px;display:flex;flex-direction:column}
.title{height:17px;display:flex;align-items:center;justify-content:flex-end;gap:7px;padding-right:2px;background:linear-gradient(#bfcfe2,#dbe5f1);flex:none}
.title button{display:flex}
.bar{height:30px;padding:8px 0 0 74px;background:#ecedec;flex:none}
.green{flex:1;background:var(--green);border:1px solid var(--line)}
.foot{height:30px;border:1px solid var(--line);margin-top:3px;flex:none}
drop-menu{position:absolute;left:12px;top:45px}
.handle{position:absolute;left:2px;top:728px;width:8px;height:57px;border-radius:3px;background:#606060;box-shadow:0 0 3px #999;padding:32px 1px 2px}
.handle i{display:block;height:22px;background:repeating-linear-gradient(#4ecb7d 0 1px,#555 1px 2px)}</style>
<header><button aria-label="收起"><svg width="6" height="2"><path d="M0 0h6v2H0z"/></svg></button><i></i><button aria-label="关闭"><svg width="6" height="6"><path d="M0 0l6 6M6 0L0 6" stroke="#000" stroke-width="1.500"/></svg></button></header>
<div class="box"><nav><button class="open"><u>M</u>管理</button><button><u>D</u>设计</button><button><u>P</u>出图</button><button><u>B</u>箱梁</button><button><u>T</u>工具</button><button><u>H</u>帮助</button></nav>
<div class="tools"><i></i><i></i><i></i></div>
<div class="main"><div class="tabs"><side-tab h="91" icon="tab1">施工面</side-tab><side-tab h="134" icon="tab2">总图Drawing</side-tab><side-tab h="103" icon="tab3">修改文件</side-tab><side-tab h="92" icon="tab4">梁口向钢</side-tab></div><div class="tree"></div>
<div class="list"><div class="title"><button aria-label="固定"><svg width="8" height="10"><path d="M2.500 0v5M5.500 0v5M2 .5h4M0 5.500h8M4 6v4" stroke="#333" fill="none"/></svg></button><button aria-label="关闭"><svg width="12" height="12"><rect x=".5" y=".5" width="11" height="11" rx="2" fill="#dfe7f1" stroke="#667"/><path d="M3.500 3.500l5 5M8.500 3.500l-5 5" stroke="#333" stroke-width="1.500"/></svg></button></div>
<div class="bar">${svg('mclip')}</div><div class="green"></div><div class="foot"></div></div></div></div>
<div class="handle"><i></i></div><drop-menu></drop-menu>`);

define('lisp-bar', () => {
  const items = ['格式(F)','符号(C)','表格(G)','绘图(D)','标注(D)','修改(M)','多线(O)','查询(L)','文本(T)','打印(P)','图层(L)','操作(D)','帮助(H)'];
  return `<style>:host{display:flex;flex:none;height:30px}
div{display:flex;align-items:center;padding-left:3px;border-right:1px solid var(--line);margin-top:1px}
i{align-self:stretch;width:6px;border:solid var(--line);border-width:0 1px;margin-right:2px}nav{display:flex;gap:11px;padding:0 12px 0 9px}</style>
<div><i></i>${svg('lisp', 15)}<nav>${items.map(t => `<button>${t.replace(/\((.)\)/, '(<u>$1</u>)')}</button>`).join('')}</nav></div>`;
});

define('tool-strip', () => {
  const g = s => s.split(' ').map(n => n === '|' ? '<hr>' : `<cad-button strip name="${n}"></cad-button>`).join('');
  return `<style>:host{display:block;width:26px;flex:none;overflow:hidden;border-right:1px solid var(--line)}
i{display:block;height:7px;margin:2px 4px 1px 2px;border:solid var(--line);border-width:1px 0;background:linear-gradient(#fff 1px,var(--face) 1px 3px,var(--line) 3px 4px,#fff 4px)}
section{display:flow-root;border-bottom:1px solid var(--line);padding:0 0 5px}section+section{border:0;padding-top:2px}
cad-button{display:block}hr{height:1px;border:0;background:var(--line);margin:2px 4px 3px 2px}</style>
<section><i></i>${g('line xline pline poly rect arc circ cloud spline ell ella insb mkb pt hatch grad region table mtext')}</section>
<section><i></i>${g('dlin dali darc dord | drad djog ddia dang | qdim dbase dcont dspace dbreak | tol cmark')}</section>`;
});

define('draw-area', () => `<style>:host{display:flex;flex-direction:column;flex:1;min-width:0}
.files{display:flex;height:22px;flex:none;border-bottom:2px solid #8c8c9a}
.files button{width:64px;height:21px;border:1px solid #8d95a8;border-bottom:0;border-width:1px 2px 0 1px;background:#e4ecf4;font:10px/16px var(--mono)}
.canvas{flex:1;position:relative;background:#000;border-top:2px solid var(--dark);margin-top:1px;overflow:hidden}
.pick{position:absolute;left:19px;top:321px;width:21px;height:21px;border:1px solid #fff}
.ucs{position:absolute;left:130px;bottom:0;fill:none;stroke:#fff}
.ucs text{fill:#fff;stroke:none;font:300 25px Lato,sans-serif}
.sheets{height:17px;flex:none;display:flex;align-items:stretch;line-height:16px;border-bottom:1px solid var(--face);padding-left:2px}
.sheets>button{height:15px;line-height:15px}
.nav{width:14px;display:flex;align-items:center;justify-content:center;border:solid var(--line);border-width:0 1px 1px 0;color:#666}
.act{background:#000;color:#fff;padding:0 10px;clip-path:polygon(2px 0,100% 0,calc(100% - 5px) 100%,8px 100%)}
.tb{padding:0 4px;border-bottom:1px solid #666}
.bar{margin-left:auto;width:314px;background:#ececec;display:flex;align-items:center;gap:7px}.bar b{width:5px;height:13px;border:1px solid #778;border-radius:2px;background:#fff}</style>
<div class="files"><button>Drawing1</button></div>
<div class="canvas"><div class="pick"></div>
<svg class="ucs" width="140" height="140"><path d="M5.500 113.500h16v15h-16zM13.500 49v79M5.500 120.500h79M13.500 32.500l-7 17h14zM84.500 114.500v12l17-6zM11.500 40v9M16.500 42v7M86 117.500h6M86 123.500h6"/><text x="7" y="20">Y</text><text x="114" y="130">X</text></svg></div>
<div class="sheets">${['M7 0v10L2 5z','M6 0v10L1 5z','M2 0v10l5-5z','M1 0v10l5-5z'].map((d, i) => `<button class="nav" aria-label="nav ${i + 1}"><svg width="8" height="10"><path d="${d}" fill="currentColor"/>${i === 0 ? '<path d="M.5 0v10" stroke="currentColor"/>' : i === 3 ? '<path d="M7.500 0v10" stroke="currentColor"/>' : ''}</svg></button>`).join('')}
<button class="act">模型</button><button class="tb">布局1</button><svg width="7" height="15"><path d="M1 15L6 0" stroke="#333" stroke-width="1.500"/></svg><button class="tb">布局2</button><svg width="7" height="15"><path d="M1 15L6 0" stroke="#333" stroke-width="1.500"/></svg>
<div class="bar"><b></b><svg width="4" height="8"><path d="M4 0v8L0 4z"/></svg></div></div>`);

define('command-window', () => `<style>:host{display:flex;flex:none;border-top:2px solid #fff;padding-bottom:1px}
.wrap{flex:1;display:flex;margin-top:3px;border-top:1px solid var(--dark);padding-left:5px}
i{width:8px;margin:7px 3px 4px 0;border:1px solid var(--line);border-top:0;background:linear-gradient(90deg,#fff 2px,var(--line) 2px 3px,#fff 3px)}
.box{flex:1;margin-top:9px;background:var(--green);border:solid var(--dark);border-width:1px 0 0 1px;font:13px/16px "Liberation Mono","Noto Sans CJK SC",monospace;min-width:0}
p{margin:0;display:flex;gap:7px;height:16px}span{font-size:16px;line-height:16px;white-space:nowrap}
.log{padding:2px 0 2px 1px;border-bottom:1px solid #8d9d90}label{display:flex;height:18px;padding:1px 0 0 1px}
input{flex:1;border:0;background:none;padding:0;font:inherit}span b{font-weight:400;font-size:13px}</style>
<div class="wrap"><i></i><div class="box"><div class="log">${['properties','BRDCFG','GZW','GZW'].map(t => `<p><span>命令<b>:</b></span>${t}</p>`).join('')}</div><label><span>命令<b>:</b></span><input></label></div></div>`);

define('status-bar', () => `<style>:host{display:flex;flex:none;height:13px;overflow:hidden;flex-direction:column;border-top:1px solid var(--line);background:#fff}
div{margin-top:1px;border-top:1px solid var(--line);box-shadow:inset 0 1px #fff;background:#f0eded;padding:2px 5px 0;display:flex;gap:5px;height:24px;flex:none}
button,output{height:20px;flex:none;line-height:20px;padding:0 1px;border:solid var(--line);border-width:0 1px 1px 0;box-shadow:inset 1px 1px #fff;font-family:"Noto Sans CJK SC",sans-serif}
output{width:186px;border-width:1px;padding-left:7px;font:10px/20px var(--mono)}.dn{border-color:#000;border-width:1px 0 0 1px;box-shadow:none}.en{font:10px/20px var(--mono)}</style>
<div><output>877.0449, 1301.3298, 0.0000</output><button>捕捉</button><button>栅格</button><button>正交</button><button>极轴</button><button>对象捕捉</button><button class="dn">对象追踪</button><button class="dn en">DUCS</button><button class="dn en">DYN</button><button>线宽</button><button class="dn">模型</button></div>`);

define('mark-up', () => `<style>:host{position:absolute;left:0;top:70px;pointer-events:none}text{font:italic 700 40px Lato,sans-serif;fill:#f00}</style>
<svg width="270" height="100"><g fill="none" stroke="#f00" stroke-width="4" stroke-linejoin="round"><path d="M11 23h54.500v26.500H11z"/><path d="M19 55h206v17H19z"/><path d="M86 8l-5 16" stroke-linecap="round"/></g>
<text x="231" y="87">2</text>
<circle cx="201" cy="68" r="7" fill="none" stroke="#5ba8b8" stroke-width="2.500"/><path d="M194 68a7 7 0 0 1 7-7" fill="none" stroke="#a8e4ea" stroke-width="2"/>
<path d="M186.500 70.500v15l3.500-3 3 6 2.500-1.500-3-5.500h5z" fill="#fff" stroke="#000"/></svg>`);

define('water-mark', () => `<style>:host{position:absolute;right:74px;bottom:29px;pointer-events:none}svg{filter:drop-shadow(0 0 1px rgba(90,110,90,.45))}
.w{fill:#fff;opacity:.75}.b{font:700 63px "Liberation Sans",sans-serif}.c{font:900 47px "Noto Sans CJK SC",sans-serif}.j{font:33px "Open Sans",sans-serif}.d{font:700 42px "Liberation Sans",sans-serif;fill:#c3dac7}</style>
<svg width="300" height="150" viewBox="1205 825 300 150"><g class="w"><ellipse cx="1320" cy="870" rx="10.500" ry="13.500"/><ellipse cx="1339.500" cy="850" rx="10" ry="14"/><ellipse cx="1364.500" cy="852" rx="10.500" ry="13.500" transform="rotate(8 1364 852)"/><ellipse cx="1381" cy="876" rx="10.500" ry="13.500"/>
<path d="M1349 872c10 0 14 8 22 16s14 14 14 22c0 9-6 15-16 15-8 0-12-2-20-2s-10 2-18 2c-10 0-16-7-16-16 0-8 6-13 13-20 8-8 11-17 21-17z"/>
<text class="b" x="1210" y="923">Bai</text><text class="c" x="1395" y="918">经验</text><text class="j" x="1214" y="960">jingyan.baidu.com</text></g><text class="d" x="1323" y="917">du</text></svg>`);

define('cad-app', () => `<style>:host{display:flex;flex-direction:column;height:100vh;position:relative;overflow:hidden}
main{flex:1;display:flex;min-height:0}
.right{flex:1;display:flex;flex-direction:column;min-width:0}.mid{flex:1;display:flex;min-height:0}</style>
<cad-menubar></cad-menubar><cad-toolbars></cad-toolbars>
<main><side-dock></side-dock><div class="right"><lisp-bar></lisp-bar><div class="mid"><tool-strip></tool-strip><draw-area></draw-area></div><command-window></command-window></div></main>
<status-bar></status-bar><mark-up></mark-up><water-mark></water-mark>`);
</script>
</body>
</html>
